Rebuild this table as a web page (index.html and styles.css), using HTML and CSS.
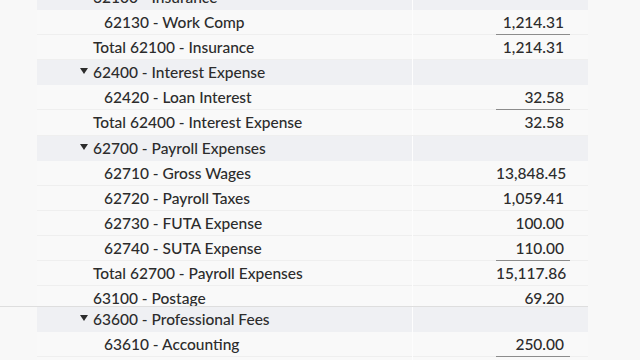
FILE: index.html
```html
<!DOCTYPE html>
<html>
<head>
<meta charset="utf-8">
<link rel="stylesheet" href="styles.css">
</head>
<body>
<div class="page">
  <div class="sheet sheet-top">
    <div class="row head first"><div class="label lvl1">62100 - Insurance</div><div class="amt"></div></div>
    <div class="row"><div class="label lvl2">62130 - Work Comp</div><div class="amt"><span class="num">1,214.31</span></div></div>
    <div class="row"><div class="label lvl1">Total 62100 - Insurance</div><div class="amt"><span class="num total">1,214.31</span></div></div>
    <div class="row head"><div class="label lvl1"><svg class="caret" viewBox="0 0 8 6"><path d="M0 0h8L4 6z"/></svg>62400 - Interest Expense</div><div class="amt"></div></div>
    <div class="row"><div class="label lvl2">62420 - Loan Interest</div><div class="amt"><span class="num">32.58</span></div></div>
    <div class="row"><div class="label lvl1">Total 62400 - Interest Expense</div><div class="amt"><span class="num total">32.58</span></div></div>
    <div class="row head"><div class="label lvl1"><svg class="caret" viewBox="0 0 8 6"><path d="M0 0h8L4 6z"/></svg>62700 - Payroll Expenses</div><div class="amt"></div></div>
    <div class="row"><div class="label lvl2">62710 - Gross Wages</div><div class="amt"><span class="num">13,848.45</span></div></div>
    <div class="row"><div class="label lvl2">62720 - Payroll Taxes</div><div class="amt"><span class="num">1,059.41</span></div></div>
    <div class="row"><div class="label lvl2">62730 - FUTA Expense</div><div class="amt"><span class="num">100.00</span></div></div>
    <div class="row"><div class="label lvl2">62740 - SUTA Expense</div><div class="amt"><span class="num">110.00</span></div></div>
    <div class="row"><div class="label lvl1">Total 62700 - Payroll Expenses</div><div class="amt"><span class="num total">15,117.86</span></div></div>
    <div class="row"><div class="label lvl1">63100 - Postage</div><div class="amt"><span class="num">69.20</span></div></div>
  </div>
  <div class="sheet sheet-bottom">
    <div class="row head"><div class="label lvl1"><svg class="caret" viewBox="0 0 8 6"><path d="M0 0h8L4 6z"/></svg>63600 - Professional Fees</div><div class="amt"></div></div>
    <div class="row"><div class="label lvl2">63610 - Accounting</div><div class="amt"><span class="num">250.00</span></div></div>
    <div class="row"><div class="label lvl1">Total 63600 - Professional Fees</div><div class="amt"><span class="num total">250.00</span></div></div>
  </div>
</div>
</body>
</html>
```
FILE: styles.css
```css
html, body {
  margin: 0;
  padding: 0;
  background: #f8f8f8;
}
body {
  font-family: Lato, "Noto Sans", sans-serif;
  font-size: 15.5px;
  font-weight: 500;
  color: #2c2c2c;
}
.page {
  width: 640px;
  height: 360px;
  overflow: hidden;
}
.sheet {
  margin-left: 37px;
  width: 551px;
  overflow: hidden;
}
.sheet-top {
  height: 306px;
}
.sheet-bottom {
  border-top: 1px solid #dedede;
  margin-left: 0;
  padding-left: 37px;
  width: 551px;
}
.row {
  display: grid;
  grid-template-columns: 376px 175px;
  height: 25.1px;
  border-bottom: 1px solid #efefef;
  box-sizing: border-box;
  background: #f9f9f9;
}
.sheet-bottom .row {
  height: 25px;
}
.row.first {
  margin-top: -15px;
}
.row.head {
  background: #eff0f3;
  border-bottom-color: #eff0f3;
}
.label {
  line-height: 25px;
  white-space: nowrap;
  border-right: 1px solid #fdfdfd;
  display: flex;
  align-items: center;
}
.lvl1 { padding-left: 56px; }
.lvl2 { padding-left: 67px; }
.caret {
  width: 8px;
  height: 6px;
  fill: #2c2c2c;
  margin-left: -13px;
  margin-right: 5px;
  margin-top: -3px;
}
.amt {
  display: flex;
  justify-content: flex-end;
  align-items: stretch;
  padding-right: 18px;
}
.num {
  display: block;
  width: 74px;
  box-sizing: border-box;
  text-align: right;
  padding-right: 6px;
  line-height: 24px;
  margin-top: -1px;
  border-top: 1px solid transparent;
  white-space: nowrap;
}
.num.total {
  border-top-color: #8c8c8c;
}
```
